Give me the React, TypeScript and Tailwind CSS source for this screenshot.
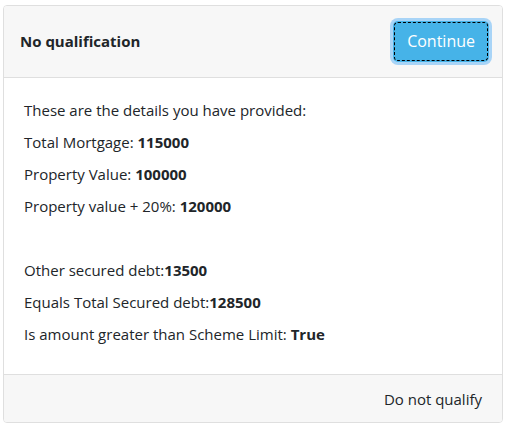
import React from "react";

const rows: { label: string; value?: string }[] = [
  { label: "These are the details you have provided:" },
  { label: "Total Mortgage: ", value: "115000" },
  { label: "Property Value: ", value: "100000" },
  { label: "Property value + 20%: ", value: "120000" },
  { label: "" },
  { label: "Other secured debt:", value: "13500" },
  { label: "Equals Total Secured debt:", value: "128500" },
  { label: "Is amount greater than Scheme Limit: ", value: "True" },
];

export default function App() {
  return (
    <div
      className="bg-white w-[509px] h-[430px] pt-[5px] pl-[3px] text-[#212529]"
      style={{ fontFamily: '"Segoe UI", "Open Sans", sans-serif' }}
    >
      <div className="w-[500px] h-[418px] border border-[#dfdfdf] rounded-[4px] flex flex-col overflow-hidden">
        {/* Header */}
        <div className="h-[72px] bg-[#f7f7f7] border-b border-[#dfdfdf] flex items-center justify-between pl-[16px] pr-[13px]">
          <h3 className="text-[15px] font-bold">No qualification</h3>
          <button className="h-[41px] mb-[1px] px-[14px] rounded-[5px] bg-[#46b3e8] text-white text-[16px] outline-1 outline-dashed outline-black -outline-offset-2 ring-[3px] ring-[#a8d4f7]">
            Continue
          </button>
        </div>

        {/* Body */}
        <div className="flex-1 pt-[16px] pl-[20px]">
          {rows.map((r, i) => (
            <p key={i} className="h-[32px] text-[15px] leading-[32px]">
              {r.label}
              {r.value && <b>{r.value}</b>}
            </p>
          ))}
        </div>

        {/* Footer */}
        <div className="h-[48px] bg-[#f7f7f7] border-t border-[#dfdfdf] flex items-center justify-end pr-[20px] pt-[1px] text-[15px]">
          Do not qualify
        </div>
      </div>
    </div>
  );
}
